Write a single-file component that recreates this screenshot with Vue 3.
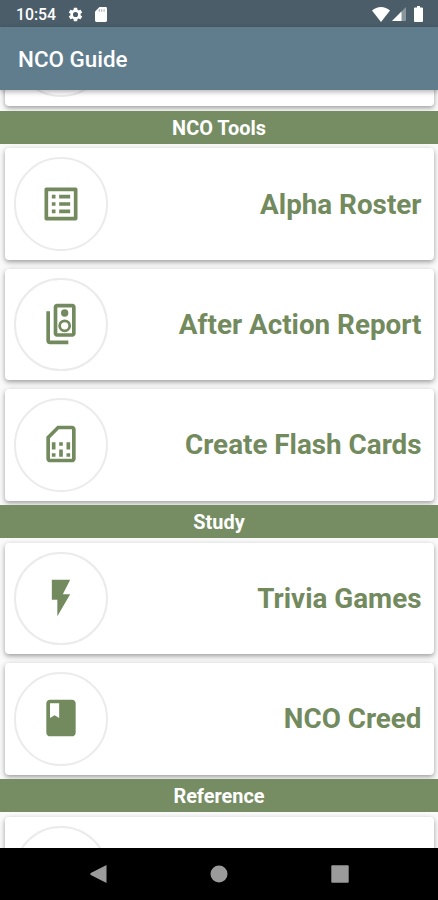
<script setup>
import { ref } from "vue";

const icons = {
  list: "M19 5v14H5V5h14m1.1-2H3.9c-.5 0-.9.4-.9.9v16.2c0 .4.4.9.9.9h16.2c.4 0 .9-.5.9-.9V3.9c0-.5-.5-.9-.9-.9zM11 7h6v2h-6zm0 4h6v2h-6zm0 4h6v2h-6zM7 7h2v2H7zm0 4h2v2H7zm0 4h2v2H7z",
  speakers:
    "M18.2 1H9.8C8.81 1 8 1.81 8 2.8v14.4c0 .99.81 1.79 1.8 1.79l8.4.01c.99 0 1.8-.81 1.8-1.8V2.8c0-.99-.81-1.8-1.8-1.8zM18 17l-8-.01V3h8v14zM14 8a2 2 0 1 0 0-4 2 2 0 0 0 0 4zm0 8.5a3.5 3.5 0 1 0 0-7 3.5 3.5 0 0 0 0 7zm0-5.5a2 2 0 1 1 0 4 2 2 0 0 1 0-4zM6 5H4v16a2 2 0 0 0 2 2h10v-2H6V5z",
  sim: "M18 2h-8L4 8v12c0 1.1.9 2 2 2h12c1.1 0 2-.9 2-2V4c0-1.1-.9-2-2-2zm0 18H6V8.83L10.83 4H18v16zM7 17h2v2H7zm8 0h2v2h-2zm-8-6h2v4H7zm4 4h2v4h-2zm0-4h2v2h-2zm4 0h2v4h-2z",
  flash: "M7 2v11h3v9l7-12h-4l4-8z",
  book: "M18 2H6c-1.1 0-2 .9-2 2v16c0 1.1.9 2 2 2h12c1.1 0 2-.9 2-2V4c0-1.1-.9-2-2-2zM6 4h5v8l-2.5-1.5L6 12V4z",
};

// the first and last sections are partly scrolled out of view
const sections = ref([
  { title: "", items: [{ label: "", icon: "" }] },
  {
    title: "NCO Tools",
    items: [
      { label: "Alpha Roster", icon: "list" },
      { label: "After Action Report", icon: "speakers" },
      { label: "Create Flash Cards", icon: "sim" },
    ],
  },
  {
    title: "Study",
    items: [
      { label: "Trivia Games", icon: "flash" },
      { label: "NCO Creed", icon: "book" },
    ],
  },
  { title: "Reference", items: [{ label: "", icon: "" }] },
]);
</script>

<template>
  <div class="screen">
    <div class="status_bar">
      <span class="clock">10:54</span>
      <svg class="gear" viewBox="0 0 24 24">
        <path
          d="M19.14 12.94c.04-.3.06-.61.06-.94 0-.32-.02-.64-.07-.94l2.03-1.58c.18-.14.23-.41.12-.61l-1.92-3.32c-.12-.22-.37-.29-.59-.22l-2.39.96c-.5-.38-1.03-.7-1.62-.94l-.36-2.54c-.04-.24-.24-.41-.48-.41h-3.84c-.24 0-.43.17-.47.41l-.36 2.54c-.59.24-1.13.57-1.62.94l-2.39-.96c-.22-.08-.47 0-.59.22L2.74 8.87c-.12.21-.08.47.12.61l2.03 1.58c-.05.3-.09.63-.09.94s.02.64.07.94l-2.03 1.58c-.18.14-.23.41-.12.61l1.92 3.32c.12.22.37.29.59.22l2.39-.96c.5.38 1.03.7 1.62.94l.36 2.54c.05.24.24.41.48.41h3.84c.24 0 .44-.17.47-.41l.36-2.54c.59-.24 1.13-.56 1.62-.94l2.39.96c.22.08.47 0 .59-.22l1.92-3.32c.12-.22.07-.47-.12-.61l-2.01-1.58zM12 15.6a3.6 3.6 0 1 1 0-7.2 3.6 3.6 0 0 1 0 7.2z"
        />
      </svg>
      <svg class="sd_card" viewBox="0 0 12 15">
        <path d="M4.5 0H10.6Q12 0 12 1.4V13.6Q12 15 10.6 15H1.4Q0 15 0 13.6V4.5z" />
        <path class="slots" d="M4.3 2.3v2.4M6.7 2.3v2.4M9.1 2.3v2.4" />
      </svg>
      <span class="spacer"></span>
      <svg class="wifi" viewBox="0 0 18 15">
        <path d="M9 15 0 3.5Q4 0 9 0t9 3.5z" />
      </svg>
      <svg class="signal" viewBox="0 0 14 14">
        <path class="faint" d="M14 0v14H0z" />
        <path d="M9.5 4.5V14H0z" />
      </svg>
      <svg class="battery" viewBox="0 0 9 16">
        <path d="M3 0h3v1.5h2q1 0 1 1V15q0 1-1 1H1q-1 0-1-1V2.5q0-1 1-1h2z" />
      </svg>
    </div>

    <header class="app_bar">NCO Guide</header>

    <main class="content">
      <div class="list">
        <section v-for="(section, i) in sections" :key="i">
          <h2 v-if="section.title" class="section_title">{{ section.title }}</h2>
          <div v-for="item in section.items" :key="item.label" class="card">
            <div class="circle">
              <svg v-if="item.icon" viewBox="0 0 24 24">
                <path fill-rule="evenodd" :d="icons[item.icon]" />
              </svg>
            </div>
            <span class="card_label">{{ item.label }}</span>
          </div>
        </section>
      </div>
    </main>

    <nav class="nav_bar">
      <svg viewBox="0 0 18 18"><path d="M16.5 0v18L.8 10Q-.3 9 .8 8z" /></svg>
      <svg viewBox="0 0 18 18"><circle cx="9" cy="9" r="8.5" /></svg>
      <svg viewBox="0 0 18 18"><rect x=".3" y=".3" width="17.4" height="17.4" rx="1" /></svg>
    </nav>
  </div>
</template>

<style>
body {
  margin: 0;
}
</style>

<style scoped>
.screen {
  display: flex;
  flex-direction: column;
  width: 438px;
  height: 900px;
  overflow: hidden;
  background: #fafafa;
  font-family: Roboto, sans-serif;
}

.status_bar {
  display: flex;
  align-items: center;
  flex: none;
  box-sizing: border-box;
  height: 27px;
  padding: 1px 15px 0 16px;
  background: #4a5d68;
  color: #fff;
}
.status_bar svg {
  fill: #fff;
}
.clock {
  width: 51px;
  font-size: 15.8px;
  font-weight: 500;
  line-height: 27px;
}
.gear {
  width: 17px;
  height: 17px;
}
.sd_card {
  width: 12px;
  height: 15px;
  margin-left: 11px;
}
.slots {
  stroke: #9aa5ab;
  stroke-width: 1;
}
.spacer {
  flex: 1;
}
.wifi {
  width: 18px;
  height: 15px;
  margin-right: 2px;
}
.signal {
  width: 14px;
  height: 14px;
  margin-right: 8px;
}
.faint {
  opacity: 0.35;
}
.battery {
  width: 9px;
  height: 16px;
}

.app_bar {
  position: relative;
  z-index: 1;
  flex: none;
  box-sizing: border-box;
  height: 63px;
  padding-left: 18px;
  background: #607d8e;
  box-shadow: 0 2px 5px rgba(0, 0, 0, 0.3);
  color: #fff;
  font-size: 22.4px;
  font-weight: 500;
  line-height: 64px;
}

.content {
  flex: 1;
  min-height: 0;
  overflow: hidden;
}
/* scroll offset of the list */
.list {
  margin-top: -99.6px;
}
section {
  display: flow-root;
}
.section_title {
  position: relative;
  height: 33.2px;
  margin: 0;
  background: #768d63;
  color: #fff;
  font-size: 19.9px;
  font-weight: 700;
  line-height: 35px;
  text-align: center;
}
.card {
  display: flex;
  align-items: center;
  justify-content: space-between;
  box-sizing: border-box;
  height: 111.6px;
  margin: 4.4px 4.5px 8.8px 5px;
  padding: 0 12px 0 9px;
  border-radius: 4px;
  background: #fff;
  box-shadow: 0 2px 4px rgba(0, 0, 0, 0.26), 0 2px 7px rgba(0, 0, 0, 0.15);
}
.card:last-child {
  margin-bottom: 4.4px;
}
.circle {
  display: flex;
  align-items: center;
  justify-content: center;
  box-sizing: border-box;
  width: 93.5px;
  height: 93.5px;
  border: 2px solid #ebebeb;
  border-radius: 50%;
}
.circle svg {
  width: 44px;
  height: 44px;
  margin-bottom: 1px;
  fill: #728a5d;
}
.card_label {
  color: #728a5d;
  font-size: 27.8px;
  font-weight: 700;
}

.nav_bar {
  display: flex;
  align-items: center;
  justify-content: space-between;
  flex: none;
  box-sizing: border-box;
  height: 52px;
  padding: 0 89px 0 89.5px;
  background: #000;
}
.nav_bar svg {
  width: 18px;
  height: 18px;
  fill: #9b9b9b;
}
</style>
